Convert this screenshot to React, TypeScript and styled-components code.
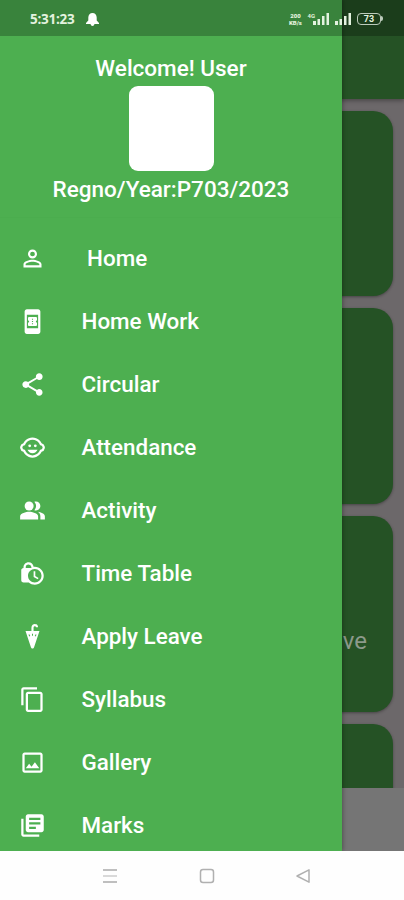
import React from "react";
import styled, { createGlobalStyle } from "styled-components";
import {
  MdPersonOutline,
  MdBookOnline,
  MdShare,
  MdChildCare,
  MdPeopleAlt,
  MdLockClock,
  MdContentCopy,
  MdOutlineImage,
  MdLibraryBooks,
} from "react-icons/md";

const GlobalStyle = createGlobalStyle`
  * { box-sizing: border-box; }
  body { margin: 0; background: #fff; font-family: Roboto, sans-serif; }
`;

const Screen = styled.div`
  position: relative;
  display: flex;
  flex-direction: column;
  width: 404px;
  height: 900px;
  overflow: hidden;
`;

const Stage = styled.div`
  position: relative;
  height: 851px;
  overflow: hidden;
`;

const Dashboard = styled.main`
  display: flex;
  flex-direction: column;
  height: 100%;
  background: #6c686a;
`;

const AppBar = styled.header`
  flex: none;
  height: 99px;
  background: #255225;
  box-shadow: 0 2px 4px rgba(0, 0, 0, 0.3);
`;

const Cards = styled.section`
  flex: 1;
  min-height: 0;
  overflow: hidden;
  display: flex;
  flex-direction: column;
  gap: 12px;
  padding: 12px 11px 0;
`;

const Card = styled.div<{ $height: number }>`
  flex: none;
  display: flex;
  justify-content: flex-end;
  align-items: flex-end;
  height: ${(p) => p.$height}px;
  padding: 0 26px 56px;
  border-radius: 20px;
  background: #255225;
  box-shadow: 0 1px 3px rgba(0, 0, 0, 0.35);
  color: #8c9a8b;
  font-size: 24px;
  line-height: 30px;
`;

const BottomBar = styled.div`
  flex: none;
  height: 63px;
  background: #757575;
`;

const Drawer = styled.aside`
  position: absolute;
  inset: 0 auto 0 0;
  width: 342px;
  display: flex;
  flex-direction: column;
  background: #4daf50;
  color: #fff;
  box-shadow: 1px 0 4px rgba(0, 0, 0, 0.3);
`;

const Profile = styled.div`
  flex: none;
  display: flex;
  flex-direction: column;
  align-items: center;
  height: 218px;
  padding-top: 54px;
  border-bottom: 1px solid #4bad4e;
  font-size: 22.5px;
  font-weight: 500;
  line-height: 28px;
`;

const Avatar = styled.div`
  width: 85px;
  height: 85px;
  margin: 4px 0 4px;
  border-radius: 9px;
  background: #fff;
`;

const Menu = styled.nav`
  display: flex;
  flex-direction: column;
  padding-top: 9px;
`;

const MenuItem = styled.a`
  flex: none;
  display: flex;
  align-items: center;
  gap: 36px;
  height: 63px;
  padding-left: 18.5px;
  font-size: 22.4px;
  font-weight: 500;
  white-space: pre;

  svg { width: 27px; height: 27px; }
`;

const MenuLabel = styled.span`
  padding-bottom: 2px;
`;

const StatusBar = styled.div`
  position: absolute;
  inset: 0 0 auto 0;
  height: 36px;
  display: flex;
  align-items: center;
  padding: 2px 20px 0 30px;
  background: rgba(0, 0, 0, 0.25);
  color: #e3f2df;
`;

const Clock = styled.span`
  width: 48px;
  font-size: 13.5px;
  font-weight: 700;
  font-family: "Open Sans", sans-serif;
  letter-spacing: -0.25px;
`;

const Bell = styled.svg`
  width: 13px;
  height: 13px;
  margin-left: 8px;
`;

const Indicators = styled.div`
  margin-left: auto;
  display: flex;
  align-items: center;
`;

const DataRate = styled.div`
  display: flex;
  flex-direction: column;
  width: 14px;
  font-size: 6px;
  font-weight: 900;
  line-height: 7px;
  text-align: center;
`;

const Network = styled.span`
  align-self: flex-start;
  margin-left: 5px;
  font-size: 6px;
  font-weight: 700;
  line-height: 7px;
`;

const Signal = styled.svg<{ $gap: number }>`
  width: 17px;
  height: 12px;
  margin-left: ${(p) => p.$gap}px;
`;

const Battery = styled.div`
  position: relative;
  width: 24px;
  height: 12px;
  margin: 0 3px 0 5px;
  border: 1.5px solid #bccbbb;
  border-radius: 4px;
  font-size: 9px;
  font-weight: 700;
  line-height: 10px;
  text-align: center;

  &::after {
    content: "";
    position: absolute;
    right: -3px;
    top: 2px;
    width: 2px;
    height: 5px;
    border-radius: 0 2px 2px 0;
    background: #bccbbb;
  }
`;

const NavBar = styled.footer`
  flex: 1;
  display: flex;
  align-items: center;
  justify-content: space-between;
  padding: 0 92px 0 101px;
  background: #fefefe;

  svg { width: 18px; height: 18px; }
`;

const ClosedUmbrella = () => (
  <svg viewBox="0 0 24 24" fill="currentColor">
    <path
      d="M12 8V4.200C12 2.600 13.200 1.700 14.400 1.900c1 .1 1.600.8 1.600 1.900"
      fill="none"
      stroke="currentColor"
      strokeWidth="1.900"
    />
    <path d="M5.800 7.200h12.400L13.400 21.500c-.4 1.500-2.400 1.500-2.800 0Z" />
    <path
      d="M8.800 10.200l.8 1.600M12 9.600v1.800M15.200 10.200l-.8 1.600"
      stroke="#4daf50"
      strokeWidth="0.900"
    />
  </svg>
);

const items: { label: string; icon: React.ComponentType }[] = [
  { label: " Home", icon: MdPersonOutline },
  { label: "Home Work", icon: MdBookOnline },
  { label: "Circular", icon: MdShare },
  { label: "Attendance", icon: MdChildCare },
  { label: "Activity", icon: MdPeopleAlt },
  { label: "Time Table", icon: MdLockClock },
  { label: "Apply Leave", icon: ClosedUmbrella },
  { label: "Syllabus", icon: MdContentCopy },
  { label: "Gallery", icon: MdOutlineImage },
  { label: "Marks", icon: MdLibraryBooks },
];

const SignalBars = ({ gap }: { gap: number }) => (
  <Signal $gap={gap} viewBox="0 0 17 12" fill="currentColor">
    <rect x="0" y="8" width="3" height="4" />
    <rect x="4.5" y="6" width="2.5" height="6" />
    <rect x="9" y="3" width="2.5" height="9" />
    <rect x="13.5" y="0" width="2.5" height="12" />
  </Signal>
);

export default function App() {
  return (
    <Screen>
      <GlobalStyle />
      <Stage>
        <Dashboard>
          <AppBar />
          <Cards>
            <Card $height={185} />
            <Card $height={196} />
            <Card $height={196}>Apply Leave</Card>
            <Card $height={196} />
          </Cards>
          <BottomBar />
        </Dashboard>
        <Drawer>
          <Profile>
            <span>Welcome! User</span>
            <Avatar />
            <span>Regno/Year:P703/2023</span>
          </Profile>
          <Menu>
            {items.map(({ label, icon: Icon }) => (
              <MenuItem key={label}>
                <Icon />
                <MenuLabel>{label}</MenuLabel>
              </MenuItem>
            ))}
          </Menu>
        </Drawer>
      </Stage>
      <StatusBar>
        <Clock>5:31:23</Clock>
        <Bell viewBox="0 0 13 13" fill="#fff">
          <path d="M6.5 0C4 0 2.300 2 2.300 4.500V7.500L0 10v1h13v-1l-2.300-2.500V4.500C10.700 2 9 0 6.500 0ZM4.500 11h4c-.3 1.300-1 2-2 2s-1.700-.7-2-2Z" />
        </Bell>
        <Indicators>
          <DataRate>
            <span>200</span>
            <span>KB/s</span>
          </DataRate>
          <Network>4G</Network>
          <SignalBars gap={-2} />
          <SignalBars gap={5} />
          <Battery>73</Battery>
        </Indicators>
      </StatusBar>
      <NavBar>
        <svg viewBox="0 0 18 18" stroke="#aaa" strokeWidth="1.6">
          <path d="M2 3h14M2 15h14" />
          <path d="M2 9h14" stroke="#d0d0d0" />
        </svg>
        <svg viewBox="0 0 18 18" fill="none" stroke="#b0b0b0" strokeWidth="1.5">
          <rect x="2.500" y="2.500" width="13" height="13" rx="2.500" />
        </svg>
        <svg viewBox="0 0 18 18" fill="none" stroke="#b0b0b0" strokeWidth="1.5" strokeLinejoin="round">
          <path d="M15 2.800v12.400L3 9Z" />
        </svg>
      </NavBar>
    </Screen>
  );
}
